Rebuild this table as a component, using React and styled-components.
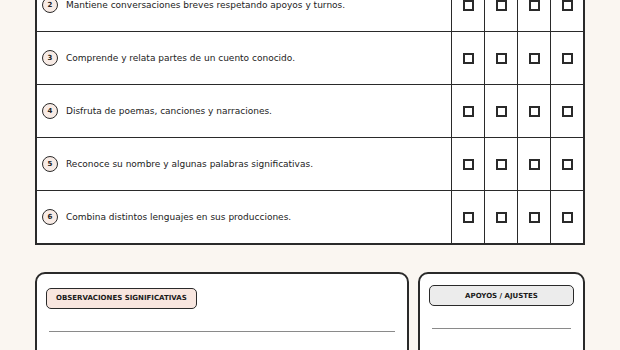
import styled, { createGlobalStyle } from 'styled-components';

const Global = createGlobalStyle`
  html, body {
    margin: 0;
    background: #faf6f1;
    font-family: "DejaVu Sans", Verdana, sans-serif;
    color: #222;
  }
`;

const Page = styled.div`
  padding: 0 35px 40px;
  margin-top: -23px;
`;

const Table = styled.div`
  background: #fff;
  border: 2px solid #2a2a2a;
`;

const Row = styled.div`
  display: grid;
  grid-template-columns: 1fr repeat(4, 33px);
  height: 52px;
  & + & {
    border-top: 1px solid #2a2a2a;
  }
`;

const ItemCell = styled.div`
  display: flex;
  align-items: center;
  gap: 8px;
  padding-left: 5px;
  font-size: 9px;
`;

const Num = styled.span`
  box-sizing: border-box;
  width: 16px;
  height: 16px;
  border-radius: 50%;
  border: 1.5px solid #2a2a2a;
  background: #f8ebe5;
  display: flex;
  align-items: center;
  justify-content: center;
  font-size: 7px;
  font-weight: 700;
  flex-shrink: 0;
`;

const CheckCell = styled.div`
  box-sizing: border-box;
  border-left: 1px solid #2a2a2a;
  display: flex;
  align-items: center;
  justify-content: center;
`;

const Box = styled.span`
  box-sizing: border-box;
  width: 11px;
  height: 11px;
  border: 2px solid #2a2a2a;
  background: #fff;
`;

const Bottom = styled.div`
  display: grid;
  grid-template-columns: 374px 1fr;
  gap: 9px;
  margin-top: 27px;
`;

const Panel = styled.div`
  background: #fff;
  border: 2px solid #2a2a2a;
  border-radius: 10px;
  padding: 11px 9px 0;
  height: 120px;
`;

const Pill = styled.div`
  box-sizing: border-box;
  display: ${({ $full }) => ($full ? 'flex' : 'inline-flex')};
  justify-content: center;
  align-items: center;
  height: 21px;
  padding: 0 9px;
  border: 1.5px solid #2a2a2a;
  border-radius: 5px;
  background: ${({ $tone }) => $tone};
  font-size: 7px;
  font-weight: 700;
  text-transform: uppercase;
  color: #1a1a1a;
`;

const Lines = styled.div`
  margin: 22px 3px 0;
  display: flex;
  flex-direction: column;
  gap: 22px;
`;

const Line = styled.div`
  height: 1px;
  background: #8a8a8a;
`;

const items = [
  [2, 'Mantiene conversaciones breves respetando apoyos y turnos.'],
  [3, 'Comprende y relata partes de un cuento conocido.'],
  [4, 'Disfruta de poemas, canciones y narraciones.'],
  [5, 'Reconoce su nombre y algunas palabras significativas.'],
  [6, 'Combina distintos lenguajes en sus producciones.'],
];

export default function App() {
  return (
    <Page>
      <Global />
      <Table>
        {items.map(([n, text]) => (
          <Row key={n}>
            <ItemCell>
              <Num>{n}</Num>
              {text}
            </ItemCell>
            {[0, 1, 2, 3].map((c) => (
              <CheckCell key={c}>
                <Box />
              </CheckCell>
            ))}
          </Row>
        ))}
      </Table>
      <Bottom>
        <Panel>
          <Pill $tone="#f8e6df">Observaciones significativas</Pill>
          <Lines>
            <Line />
            <Line />
          </Lines>
        </Panel>
        <Panel>
          <Pill $full $tone="#ececec">Apoyos / Ajustes</Pill>
          <Lines>
            <Line />
            <Line />
          </Lines>
        </Panel>
      </Bottom>
    </Page>
  );
}
